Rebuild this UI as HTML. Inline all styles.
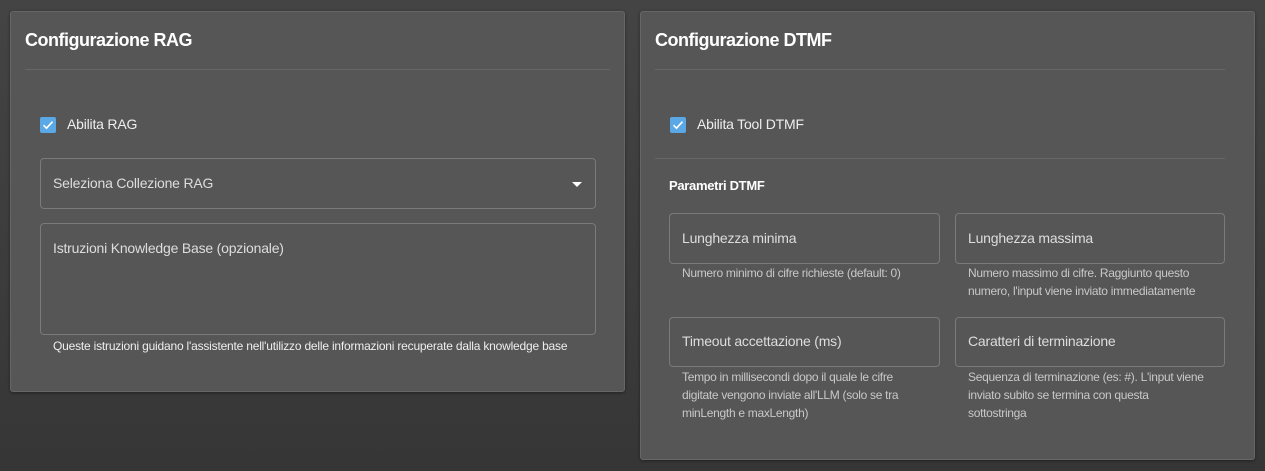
<!DOCTYPE html>
<html><head><meta charset="utf-8"><style>
*{box-sizing:border-box;margin:0;padding:0}
body{width:1265px;height:471px;background:linear-gradient(#444,#363636);font-family:"Liberation Sans",sans-serif;position:relative;overflow:hidden;color:#fff}
.card{position:absolute;background:#565656;border:1px solid #666;border-radius:3px;box-shadow:0 1px 3px rgba(0,0,0,.4)}
.abs{position:absolute}
h2{position:absolute;font-size:18px;font-weight:bold;letter-spacing:-0.5px;color:#fff}
.hr{position:absolute;height:1px;background:#666}
.cb{position:absolute;width:16px;height:16px;background:#5aa9e6;border-radius:2px}
.lbl{position:absolute;font-size:14px;color:#eee;letter-spacing:-0.2px}
.field{position:absolute;border:1px solid #7a7a7a;border-radius:4px}
.ph{position:absolute;left:12px;font-size:14px;color:#ddd;letter-spacing:-0.2px}
.help{position:absolute;font-size:12px;color:#c8c8c8;line-height:18px;letter-spacing:-0.3px}
</style></head><body>
<div class="card" style="left:10px;top:11px;width:615px;height:381px"></div>
<h2 style="left:25px;top:30px">Configurazione RAG</h2>
<div class="hr" style="left:25px;top:69px;width:585px"></div>
<div class="cb" style="left:40px;top:117px"><svg width="16" height="16" viewBox="0 0 16 16"><path d="M3.5 8.2l3 3 6-6.5" fill="none" stroke="#fff" stroke-width="1.6"/></svg></div>
<div class="lbl" style="left:67px;top:116px">Abilita RAG</div>
<div class="field" style="left:40px;top:158px;width:556px;height:51px"><div class="ph" style="top:16px">Seleziona Collezione RAG</div>
<div class="abs" style="right:13px;top:23px;width:0;height:0;border-left:5px solid transparent;border-right:5px solid transparent;border-top:5px solid #fff"></div></div>
<div class="field" style="left:40px;top:223px;width:556px;height:112px"><div class="ph" style="top:16px">Istruzioni Knowledge Base (opzionale)</div></div>
<div class="help" style="left:53px;top:337px;color:#eee;font-size:12px;letter-spacing:-0.2px">Queste istruzioni guidano l'assistente nell'utilizzo delle informazioni recuperate dalla knowledge base</div>

<div class="card" style="left:640px;top:11px;width:615px;height:449px"></div>
<h2 style="left:655px;top:30px">Configurazione DTMF</h2>
<div class="hr" style="left:655px;top:69px;width:570px"></div>
<div class="cb" style="left:670px;top:117px"><svg width="16" height="16" viewBox="0 0 16 16"><path d="M3.5 8.2l3 3 6-6.5" fill="none" stroke="#fff" stroke-width="1.6"/></svg></div>
<div class="lbl" style="left:697px;top:116px">Abilita Tool DTMF</div>
<div class="hr" style="left:655px;top:158px;width:570px"></div>
<div class="abs" style="left:669px;top:178px;font-size:13px;font-weight:bold;letter-spacing:-0.3px">Parametri DTMF</div>
<div class="field" style="left:669px;top:213px;width:271px;height:51px"><div class="ph" style="top:16px">Lunghezza minima</div></div>
<div class="field" style="left:955px;top:213px;width:270px;height:51px"><div class="ph" style="top:16px">Lunghezza massima</div></div>
<div class="help" style="left:682px;top:264px">Numero minimo di cifre richieste (default: 0)</div>
<div class="help" style="left:968px;top:264px;width:240px">Numero massimo di cifre. Raggiunto questo numero, l'input viene inviato immediatamente</div>
<div class="field" style="left:669px;top:317px;width:271px;height:50px"><div class="ph" style="top:15px">Timeout accettazione (ms)</div></div>
<div class="field" style="left:955px;top:317px;width:270px;height:50px"><div class="ph" style="top:15px">Caratteri di terminazione</div></div>
<div class="help" style="left:682px;top:368px;width:236px">Tempo in millisecondi dopo il quale le cifre digitate vengono inviate all'LLM (solo se tra minLength e maxLength)</div>
<div class="help" style="left:968px;top:368px;width:240px">Sequenza di terminazione (es: #). L'input viene inviato subito se termina con questa sottostringa</div>
</body></html>
